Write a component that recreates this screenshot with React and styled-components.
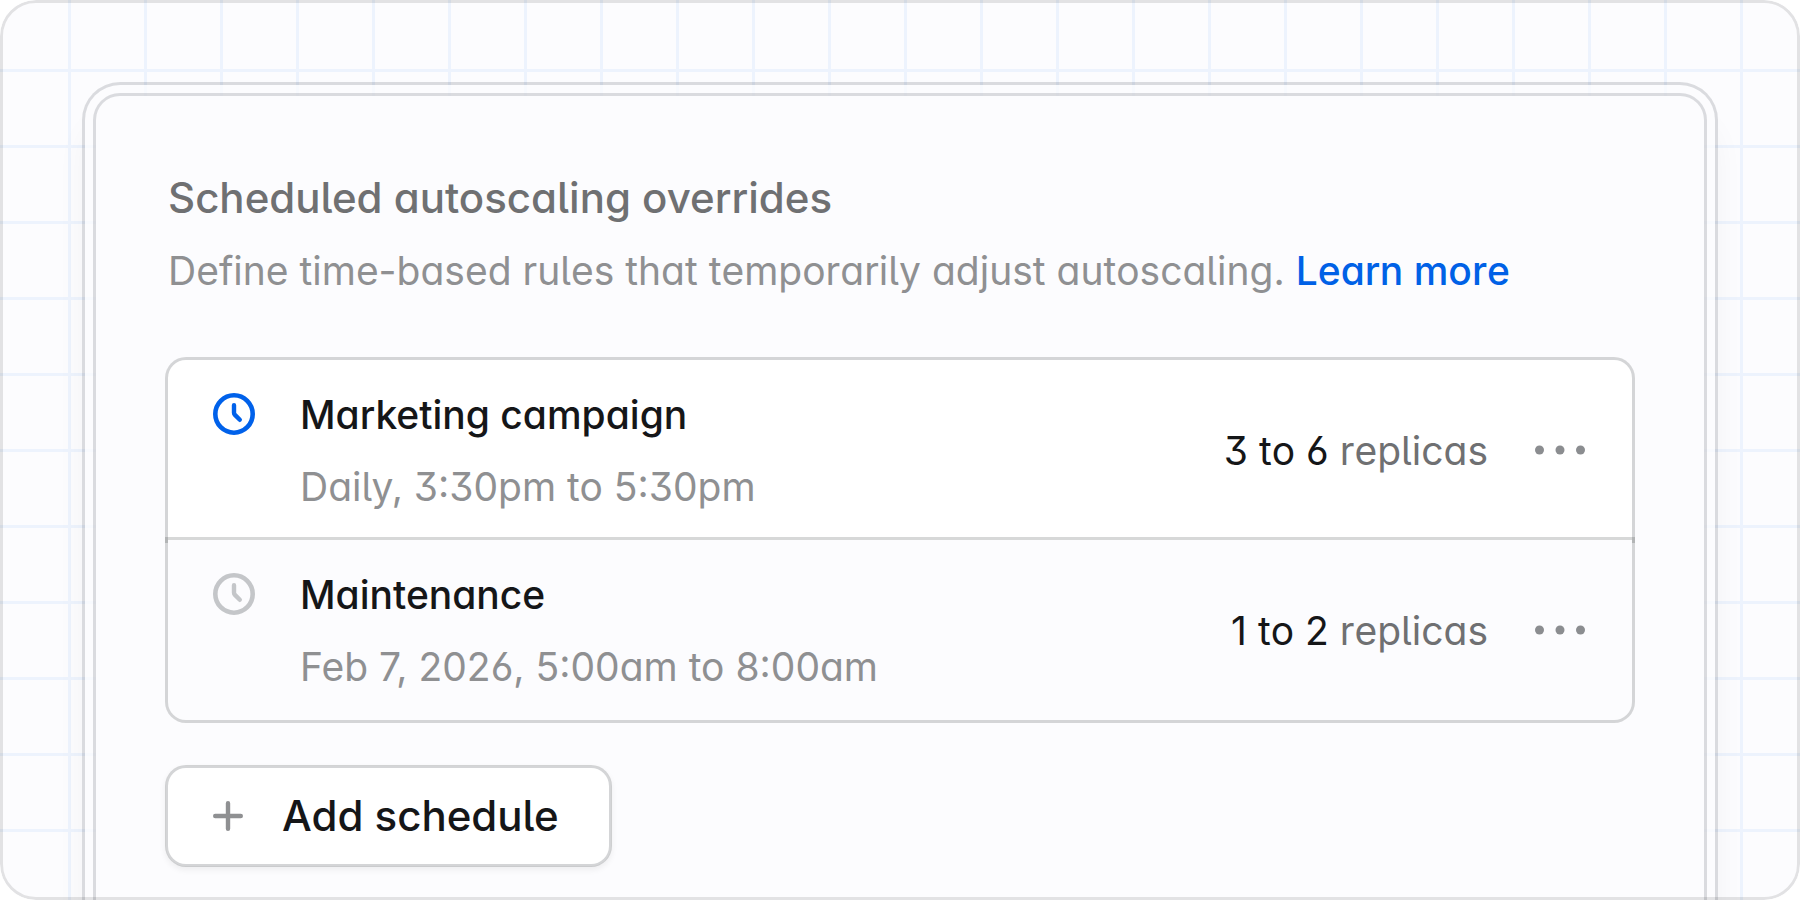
import React from 'react'
import styled, { createGlobalStyle } from 'styled-components'

const GlobalStyle = createGlobalStyle`
* {
    box-sizing: border-box;
}
body {
    margin: 0;
    background: #ffffff;
    font-family: "Inter", "Liberation Sans", sans-serif;
    font-size: 39px;
    line-height: 60px;
    font-feature-settings: "cv03", "cv04", "cv05", "cv09", "cv11";
}
`

const line = 'rgba(20, 22, 26, 0.17)'
const softLine = 'rgba(20, 26, 36, 0.14)'

const Frame = styled.div`
position: relative;
display: flex;
min-height: 100vh;
padding: 82px 82px 0;
overflow: hidden;
border-radius: 36px;
background-color: #fcfcfe;
background-image:
    linear-gradient(to right, #edf3fd 3px, transparent 3px),
    linear-gradient(to bottom, #edf3fd 3px, transparent 3px);
background-size: 76px 76px;
background-position: 68px 69px;

/* the rim lies over the card where it runs off the bottom */
&::after {
    content: "";
    position: absolute;
    inset: 0;
    border: 3px solid rgba(0, 0, 0, 0.1);
    border-radius: 36px;
    pointer-events: none;
}
`

const Shell = styled.div`
display: flex;
flex: 1;
min-width: 0;
padding: 8px 8px 0;
border: 3px solid ${softLine};
border-bottom: 0;
border-radius: 38px 38px 0 0;
background: rgba(252, 252, 254, 0.7);
background-clip: padding-box;
box-shadow: 0 36px 30px rgba(20, 22, 40, 0.04);
`

const Card = styled.main`
flex: 1;
min-width: 0;
padding: 72px 69px 33px;
border: 3px solid ${softLine};
border-bottom: 0;
border-radius: 27px 27px 0 0;
background: #fcfcfe;
background-clip: padding-box;
`

const Header = styled.header`
display: flex;
flex-direction: column;
gap: 13px;
margin-bottom: 56px;
padding-left: 3px;
`

const Title = styled.h1`
margin: 0;
font-size: 42px;
font-weight: 500;
line-height: 60px;
color: #6f7072;
`

const Description = styled.p`
margin: 0;
color: #8f9092;
font-kerning: none;
`

const Link = styled.a`
font-weight: 500;
color: #0061e6;
text-decoration: none;
`

const List = styled.ul`
margin: 0 0 42px;
padding: 0;
list-style: none;
`

const Row = styled.li`
display: flex;
align-items: center;
padding: 25px 45px 23px;
border: 3px solid ${line};
background: ${({ $active }) => ($active ? '#ffffff' : '#fcfcfe')};
background-clip: padding-box;

&:first-child {
    border-radius: 21px 21px 0 0;
}
&:last-child {
    border-radius: 0 0 21px 21px;
}
& + & {
    margin-top: -6px;
}
`

const ClockIcon = styled.svg`
flex: none;
align-self: flex-start;
width: 42px;
height: 42px;
margin-top: 8px;
color: ${({ $active }) => ($active ? '#0061ea' : '#c4c6c9')};
`

const RowText = styled.div`
display: flex;
flex: 1;
flex-direction: column;
gap: 12px;
min-width: 0;
margin-left: 45px;
`

const Name = styled.span`
font-weight: 500;
color: #151618;
`

const When = styled.span`
color: #8f9092;
`

const Replicas = styled.span`
color: #6f7072;
white-space: nowrap;
font-kerning: none;
`

const Count = styled.span`
color: #151618;
`

const MoreButton = styled.button`
display: flex;
flex: none;
margin-left: 45px;
padding: 0 0 2px;
border: 0;
background: none;
color: #8b8d90;
cursor: pointer;
`

const AddButton = styled.button`
display: flex;
align-items: center;
gap: 39px;
padding: 18px 50px 18px 45px;
border: 3px solid ${line};
border-radius: 21px;
background: #ffffff;
background-clip: padding-box;
box-shadow: 0 3px 6px rgba(0, 0, 0, 0.06);
color: #151618;
font: inherit;
font-size: 42px;
font-weight: 500;
font-feature-settings: inherit;
cursor: pointer;

svg {
    color: #8f9092;
}
`

const schedules = [
    { name: 'Marketing campaign', when: 'Daily, 3:30pm to 5:30pm', count: '3 to 6', active: true },
    { name: 'Maintenance', when: 'Feb 7, 2026, 5:00am to 8:00am', count: '1 to 2', active: false },
]

function Clock({ active }) {
    return (
        <ClockIcon $active={active} viewBox="0 0 42 42" fill="none" stroke="currentColor" aria-hidden="true">
            <circle cx="21" cy="21" r="18.7" strokeWidth="4.6" />
            <path d="M21 12.3V19.8Q21 21 21.9 21.9L26.8 26.8" strokeWidth="4.4" strokeLinecap="round" strokeLinejoin="round" />
        </ClockIcon>
    )
}

function ScheduleRow({ schedule }) {
    return (
        <Row $active={schedule.active}>
            <Clock active={schedule.active} />
            <RowText>
                <Name>{schedule.name}</Name>
                <When>{schedule.when}</When>
            </RowText>
            <Replicas><Count>{schedule.count}</Count> replicas</Replicas>
            <MoreButton type="button" aria-label={`More options for ${schedule.name}`}>
                <svg width="54" height="42" viewBox="0 0 54 42" fill="currentColor">
                    <circle cx="6.5" cy="21" r="4.5" />
                    <circle cx="27" cy="21" r="4.5" />
                    <circle cx="47.5" cy="21" r="4.5" />
                </svg>
            </MoreButton>
        </Row>
    )
}

function App() {
    return (
        <>
            <GlobalStyle />
            <Frame>
                <Shell>
                    <Card>
                        <Header>
                            <Title>Scheduled autoscaling overrides</Title>
                            <Description>
                                Define time-based rules that temporarily adjust autoscaling. <Link href="#learn-more">Learn more</Link>
                            </Description>
                        </Header>
                        <List>
                            {schedules.map((schedule) => (
                                <ScheduleRow key={schedule.name} schedule={schedule} />
                            ))}
                        </List>
                        <AddButton type="button">
                            <svg width="30" height="30" viewBox="0 0 30 30" fill="none" stroke="currentColor" strokeWidth="4.4" strokeLinecap="round" aria-hidden="true">
                                <path d="M15 2.2V27.8M2.2 15H27.8" />
                            </svg>
                            Add schedule
                        </AddButton>
                    </Card>
                </Shell>
            </Frame>
        </>
    )
}

export default App
